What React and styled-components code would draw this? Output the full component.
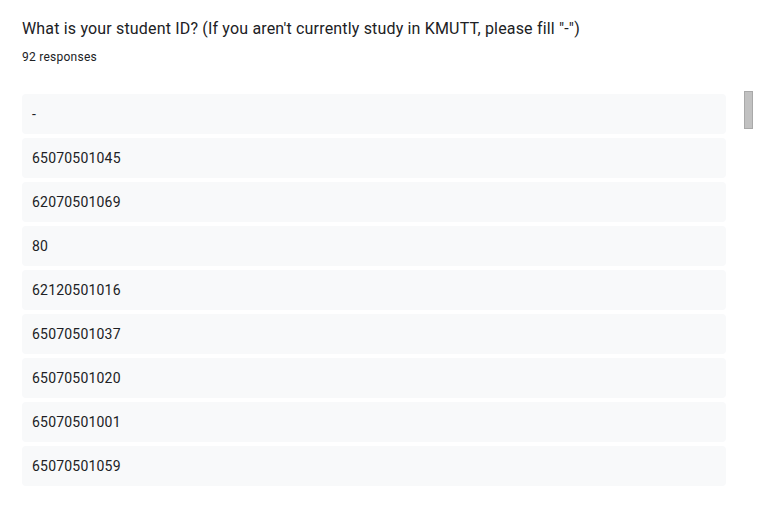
import React from "react";
import styled, { createGlobalStyle } from "styled-components";

const Global = createGlobalStyle`
  html, body { margin: 0; padding: 0; background: #fff; }
  body { font-family: Roboto, "Liberation Sans", Arial, sans-serif; color: #202124; }
`;

const Page = styled.div`
  width: 764px;
  height: 508px;
  box-sizing: border-box;
  padding: 17px 10px 0 22px;
  overflow: hidden;
`;

const Title = styled.h1`
  margin: 0;
  font-size: 16px;
  font-weight: 400;
  line-height: 24px;
  letter-spacing: 0.17px;
  color: #202124;
`;

const Count = styled.div`
  margin-top: 8px;
  font-size: 12px;
  line-height: 16px;
  letter-spacing: 0.25px;
  color: #202124;
`;

const Body = styled.div`
  display: flex;
  gap: 18px;
  margin-top: 29px;
`;

const List = styled.div`
  flex: 0 0 704px;
  display: flex;
  flex-direction: column;
  gap: 4px;
`;

const Row = styled.div`
  height: 40px;
  display: flex;
  align-items: center;
  padding: 0 10px;
  background: #f8f9fa;
  border-radius: 4px;
  font-size: 14px;
  letter-spacing: 0.2px;
  color: #202124;
`;

const Track = styled.div`
  width: 9px;
  margin-top: -3px;
`;

const Thumb = styled.div`
  width: 9px;
  height: 38px;
  box-sizing: border-box;
  background: #c1c1c1;
  border: 1px solid #a9a9a9;
`;

const answers = [
  "-",
  "65070501045",
  "62070501069",
  "80",
  "62120501016",
  "65070501037",
  "65070501020",
  "65070501001",
  "65070501059",
];

export default function App() {
  return (
    <>
      <Global />
      <Page>
        <Title>
          What is your student ID? (If you aren't currently study in KMUTT, please fill "-")
        </Title>
        <Count>92 responses</Count>
        <Body>
          <List>
            {answers.map((a, i) => (
              <Row key={i}>{a}</Row>
            ))}
          </List>
          <Track>
            <Thumb />
          </Track>
        </Body>
      </Page>
    </>
  );
}
